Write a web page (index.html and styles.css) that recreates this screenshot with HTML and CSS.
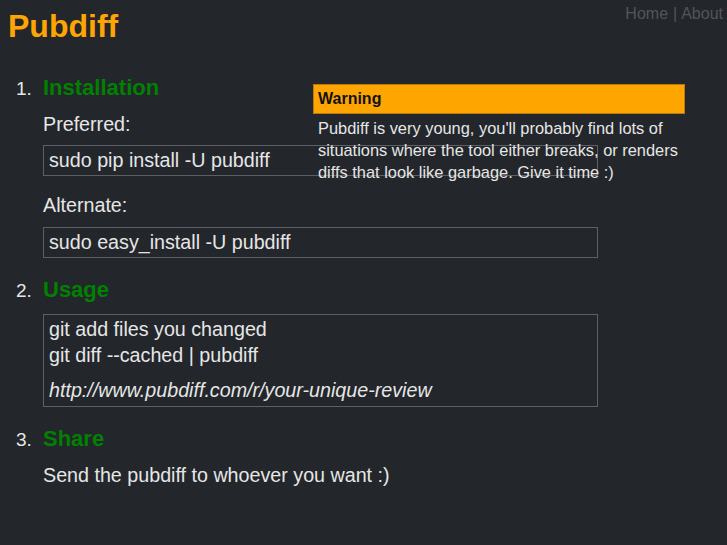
FILE: index.html
```html
<!DOCTYPE html>
<html>
<head>
<meta charset="utf-8">
<title>Pubdiff</title>
<link rel="stylesheet" href="styles.css">
</head>
<body>
<nav class="topnav"><a class="nav-link nav-home" href="#">Home</a><span class="nav-sep">|</span><a class="nav-link" href="#">About</a></nav>
<h1 class="logo">Pubdiff</h1>
<div class="content">
<ol class="steps">
  <li class="step step-install">
    <div class="step-body">
      <h2 class="step-title">Installation</h2>
      <p class="label">Preferred:</p>
      <div class="code">sudo pip install -U pubdiff</div>
      <p class="label label-alt">Alternate:</p>
      <div class="code">sudo easy_install -U pubdiff</div>
    </div>
  </li>
  <li class="step step-usage">
    <div class="step-body">
      <h2 class="step-title title-usage">Usage</h2>
      <div class="code code-usage">
        <div class="code-line">git add files you changed</div>
        <div class="code-line">git diff --cached | pubdiff</div>
        <div class="code-url">http://www.pubdiff.com/r/your-unique-review</div>
      </div>
    </div>
  </li>
  <li class="step step-share">
    <div class="step-body">
      <h2 class="step-title">Share</h2>
      <p class="label">Send the pubdiff to whoever you want :)</p>
    </div>
  </li>
</ol>
<div class="warning">
  <div class="warning-title">Warning</div>
  <p class="warning-text">Pubdiff is very young, you'll probably find lots of situations where the tool either breaks, or renders diffs that look like garbage. Give it time :)</p>
</div>
</div>
</body>
</html>
```
FILE: styles.css
```css
html, body {
  background: #23262b;
}
body {
  margin: 8px;
  font-family: "Liberation Sans", Arial, sans-serif;
  color: #e6e6e6;
}
.topnav {
  position: absolute;
  top: 5px;
  right: 4px;
  white-space: nowrap;
  font-size: 16px;
  line-height: 18px;
  color: #52555a;
}
.nav-link {
  color: #52555a;
  text-decoration: none;
}
.nav-sep {
  margin: 0 4px 0 5px;
}
.logo {
  margin: 0;
  font-size: 32px;
  line-height: 37px;
  font-weight: bold;
  color: #ffa500;
}
.content {
  position: relative;
}
.steps {
  list-style: none;
  margin: 0;
  padding: 29px 0 0 8px;
  counter-reset: step;
}
.step {
  display: flex;
  align-items: baseline;
  counter-increment: step;
}
.step::before {
  content: counter(step) ".";
  flex: 0 0 27px;
  font-size: 19px;
  color: #e6e6e6;
}
.step-usage {
  margin-top: 18px;
}
.step-share {
  margin-top: 18px;
}
.step-body {
  flex: 1;
}
.step-title {
  margin: 0 0 9px 0;
  font-size: 22px;
  line-height: 28px;
  font-weight: bold;
  color: #008000;
}
.title-usage {
  margin-bottom: 10px;
}
.label {
  margin: 0 0 8px 0;
  font-size: 19.7px;
  line-height: 26px;
}
.label-alt {
  margin-top: 16px;
  margin-bottom: 9px;
}
.code {
  width: 543px;
  border: 1px solid #5c5f63;
  padding: 1px 5px 2px 5px;
  font-size: 19.7px;
  line-height: 26px;
}
.code-usage {
  padding-bottom: 3px;
}
.code-url {
  margin-top: 9px;
  font-style: italic;
}
.warning {
  position: absolute;
  left: 305px;
  top: 39px;
  width: 372px;
}
.warning-title {
  background: #ffa500;
  border: 1px solid #b87a10;
  padding: 0 4px;
  height: 28px;
  line-height: 28px;
  font-size: 16px;
  font-weight: bold;
  color: #111;
}
.warning-text {
  margin: 3px 0 0 0;
  padding: 0 2px 0 5px;
  font-size: 16.4px;
  line-height: 22px;
  color: #e6e6e6;
}
```
